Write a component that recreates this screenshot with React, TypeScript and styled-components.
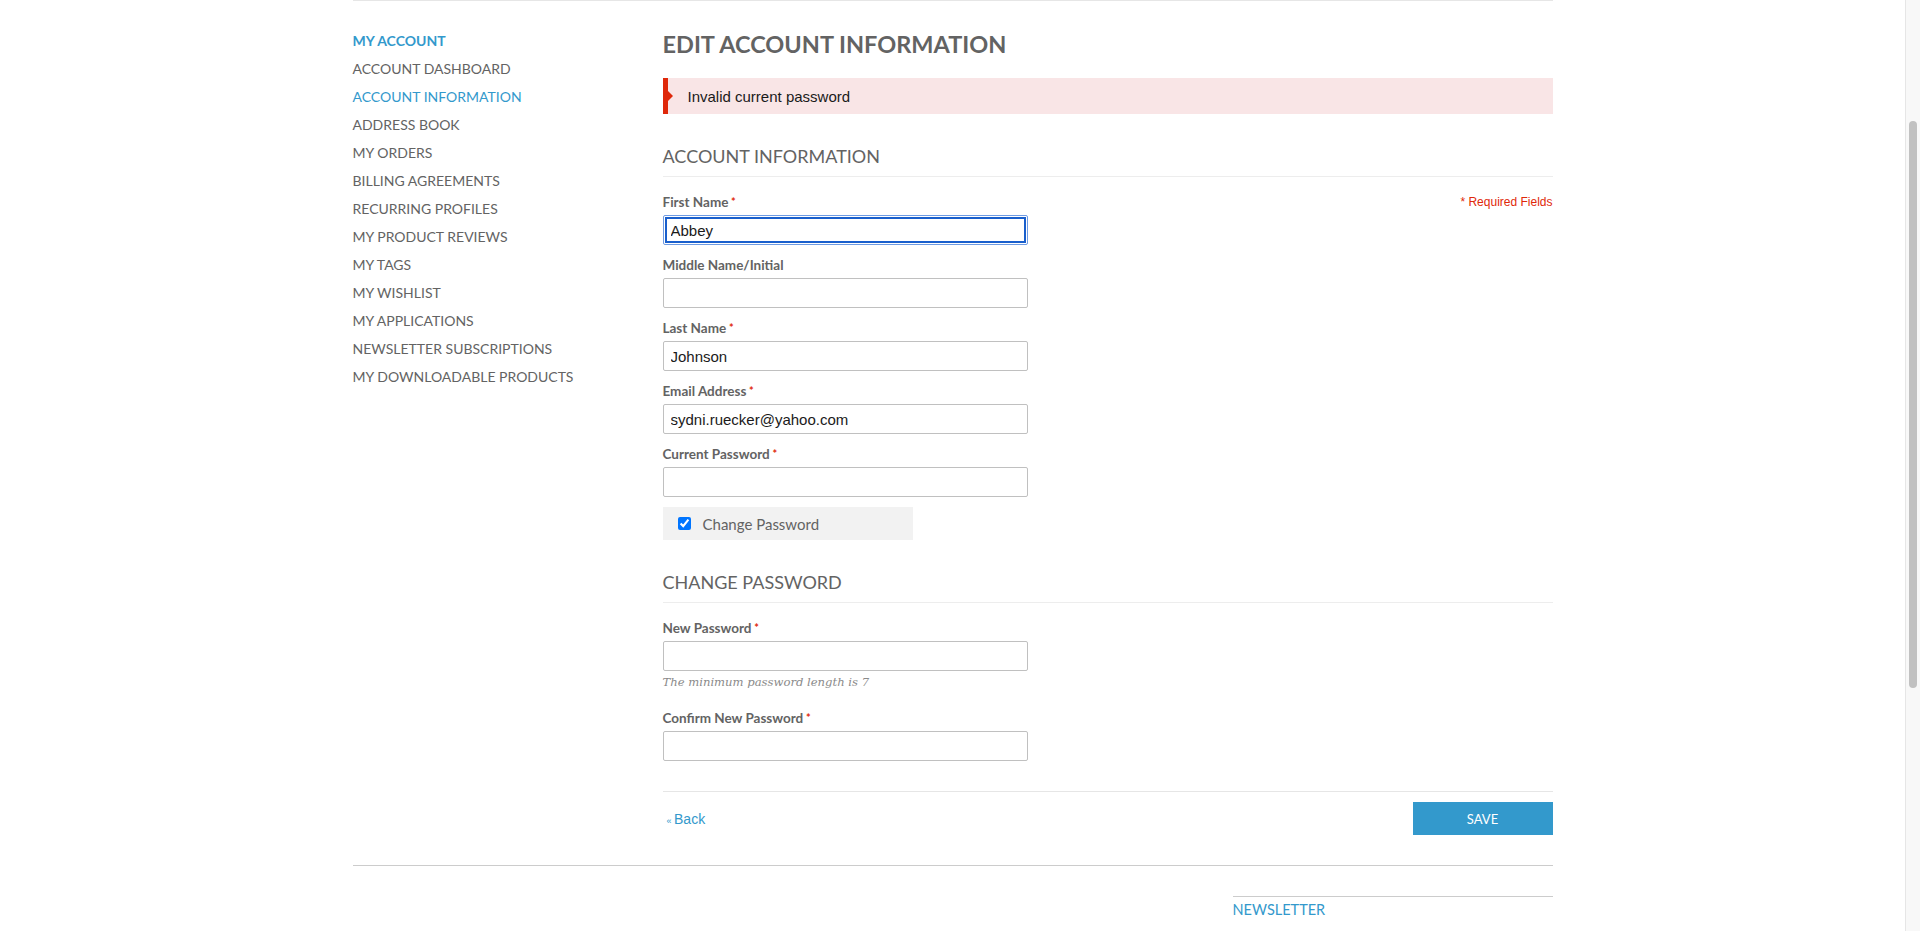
import React, { useState } from "react";
import styled, { createGlobalStyle } from "styled-components";

const HEAD_FONT = `"Lato", "Noto Sans", sans-serif`;
const BODY_FONT = `"Liberation Sans", Arial, sans-serif`;

const GlobalStyle = createGlobalStyle`
  html, body {
    margin: 0;
    padding: 0;
    height: 100%;
    overflow: hidden;
    background: #fff;
  }
  body {
    font-family: ${BODY_FONT};
    color: #636363;
  }
  * {
    box-sizing: border-box;
  }
`;

const navItems = [
  "Account Dashboard",
  "Account Information",
  "Address Book",
  "My Orders",
  "Billing Agreements",
  "Recurring Profiles",
  "My Product Reviews",
  "My Tags",
  "My Wishlist",
  "My Applications",
  "Newsletter Subscriptions",
  "My Downloadable Products",
];

interface FieldProps {
  label: string;
  required?: boolean;
  value?: string;
  type?: string;
  focused?: boolean;
  note?: string;
}

const Field: React.FC<FieldProps> = ({ label, required, value, type, focused, note }) => {
  const [val, setVal] = useState(value || "");
  return (
    <FieldRow>
      <Label>
        {label}
        {required && <Star> *</Star>}
      </Label>
      <Input
        type={type || "text"}
        value={val}
        onChange={(e) => setVal(e.target.value)}
        $focused={focused}
      />
      {note && <Note>{note}</Note>}
    </FieldRow>
  );
};

const App: React.FC = () => {
  const [changePw, setChangePw] = useState(true);

  return (
    <>
      <GlobalStyle />
      <Viewport>
        <Page>
          <Container>
            <Sidebar>
              <SideTitle>My Account</SideTitle>
              <NavList>
                {navItems.map((item) => (
                  <NavItem key={item} $active={item === "Account Information"}>
                    {item}
                  </NavItem>
                ))}
              </NavList>
            </Sidebar>

            <Main>
              <PageTitle>Edit Account Information</PageTitle>
              <ErrorMsg>Invalid current password</ErrorMsg>

              <SectionTitle>Account Information</SectionTitle>
              <FormBody>
                <Required>* Required Fields</Required>
                <Field label="First Name" required value="Abbey" focused />
                <Field label="Middle Name/Initial" />
                <Field label="Last Name" required value="Johnson" />
                <Field label="Email Address" required value="sydni.ruecker@yahoo.com" />
                <Field label="Current Password" required type="password" />
                <CheckRow>
                  <Check
                    type="checkbox"
                    checked={changePw}
                    onChange={() => setChangePw(!changePw)}
                  />
                  Change Password
                </CheckRow>
              </FormBody>

              <SectionTitle>Change Password</SectionTitle>
              <FormBody>
                <Field
                  label="New Password"
                  required
                  type="password"
                  note="The minimum password length is 7"
                />
                <Field label="Confirm New Password" required type="password" />
              </FormBody>

              <ButtonSet>
                <BackLink href="#">
                  <small>« </small>Back
                </BackLink>
                <SaveButton>Save</SaveButton>
              </ButtonSet>
            </Main>
          </Container>

          <Footer>
            <FooterCol>
              <FooterTitle>Newsletter</FooterTitle>
            </FooterCol>
          </Footer>
        </Page>
        <ScrollTrack>
          <ScrollThumb />
        </ScrollTrack>
      </Viewport>
    </>
  );
};

export default App;

const Viewport = styled.div`
  display: flex;
  height: 100vh;
  overflow: hidden;
`;

const Page = styled.div`
  flex: 1;
  min-width: 0;
`;

const ScrollTrack = styled.div`
  width: 15px;
  flex-shrink: 0;
  background: #f8f8f8;
  border-left: 1px solid #e6e6e6;
  padding: 121px 3px 0 3px;
`;

const ScrollThumb = styled.div`
  width: 8px;
  height: 567px;
  border-radius: 4px;
  background: #c1c1c1;
`;

const Container = styled.div`
  width: 1200px;
  margin: 0 auto;
  border-top: 1px solid #e6e6e6;
  display: grid;
  grid-template-columns: 1fr 890px;
  padding-bottom: 30px;
  border-bottom: 1px solid #cccccc;
`;

const Sidebar = styled.div`
  padding-top: 26px;
`;

const SideTitle = styled.div`
  font-family: ${HEAD_FONT};
  font-weight: 700;
  font-size: 14px;
  line-height: 28px;
  color: #3399cc;
  text-transform: uppercase;
`;

const NavList = styled.ul`
  list-style: none;
  margin: 0;
  padding: 0;
`;

const NavItem = styled.li<{ $active?: boolean }>`
  font-family: ${HEAD_FONT};
  font-size: 14px;
  line-height: 28px;
  text-transform: uppercase;
  color: ${(p) => (p.$active ? "#3399cc" : "#636363")};
  cursor: pointer;
`;

const Main = styled.div`
  padding-top: 27px;
`;

const PageTitle = styled.h1`
  margin: 0 0 18px;
  font-family: ${HEAD_FONT};
  font-weight: 700;
  font-size: 23.5px;
  line-height: 32px;
  color: #636363;
  text-transform: uppercase;
`;

const ErrorMsg = styled.div`
  position: relative;
  height: 36px;
  display: flex;
  align-items: center;
  padding-left: 20px;
  background: #f9e5e6;
  border-left: 5px solid #df280a;
  font-family: ${BODY_FONT};
  font-size: 15px;
  color: #1a1a1a;

  &::before {
    content: "";
    position: absolute;
    left: 0;
    top: 50%;
    margin-top: -5px;
    border-style: solid;
    border-width: 5px 0 5px 5px;
    border-color: transparent transparent transparent #df280a;
  }
`;

const SectionTitle = styled.h2`
  margin: 30px 0 0;
  padding-bottom: 8px;
  border-bottom: 1px solid #ededed;
  font-family: ${HEAD_FONT};
  font-weight: 400;
  font-size: 18px;
  line-height: 24px;
  color: #636363;
  text-transform: uppercase;
`;

const FormBody = styled.div`
  position: relative;
  padding-top: 16px;
  display: flex;
  flex-direction: column;
  align-items: flex-start;
`;

const Required = styled.p`
  position: absolute;
  right: 0;
  top: 18px;
  margin: 0;
  font-family: ${BODY_FONT};
  font-size: 12px;
  color: #df280a;
`;

const FieldRow = styled.div`
  width: 365px;
  margin-bottom: 11px;
`;

const Label = styled.label`
  display: block;
  margin-bottom: 4px;
  font-family: ${HEAD_FONT};
  font-weight: 700;
  font-size: 13.5px;
  line-height: 18px;
  color: #636363;
`;

const Star = styled.em`
  font-style: normal;
  font-size: 11px;
  vertical-align: top;
  color: #df280a;
`;

const Input = styled.input<{ $focused?: boolean }>`
  display: block;
  width: 365px;
  height: 30px;
  padding: 0 7px;
  border: 1px solid ${(p) => (p.$focused ? "#6f9be3" : "#c0c0c0")};
  border-radius: 2px;
  outline: ${(p) => (p.$focused ? "2px solid #1a5fcc" : "none")};
  outline-offset: -4px;
  font-family: ${BODY_FONT};
  font-size: 15px;
  color: #1a1a1a;
  background: #fff;
`;

const Note = styled.p`
  margin: 4px 0 9px;
  font-family: "DejaVu Serif", Georgia, serif;
  font-style: italic;
  font-size: 11.6px;
  color: #8a8a8a;
`;

const CheckRow = styled.label`
  display: flex;
  align-items: center;
  width: 250px;
  height: 33px;
  margin-top: -1px;
  padding-left: 15px;
  background: #f2f2f2;
  font-family: ${HEAD_FONT};
  font-size: 15px;
  color: #636363;
  cursor: pointer;
`;

const Check = styled.input`
  width: 13px;
  height: 13px;
  margin: 0 12px 0 0;
`;

const ButtonSet = styled.div`
  margin-top: 19px;
  padding-top: 10px;
  border-top: 1px solid #e6e6e6;
  display: flex;
  justify-content: space-between;
  align-items: center;
`;

const BackLink = styled.a`
  padding-left: 4px;
  font-family: ${BODY_FONT};
  font-size: 14px;
  color: #3399cc;
  text-decoration: none;

  small {
    font-size: 9px;
  }
`;

const SaveButton = styled.button`
  width: 140px;
  height: 33px;
  border: 0;
  background: #3399cc;
  color: #fff;
  font-family: ${HEAD_FONT};
  font-size: 13px;
  text-transform: uppercase;
  cursor: pointer;
`;

const Footer = styled.div`
  width: 1200px;
  margin: 0 auto;
  display: flex;
  justify-content: flex-end;
  padding-top: 30px;
`;

const FooterCol = styled.div`
  width: 320px;
  border-top: 1px solid #cccccc;
`;

const FooterTitle = styled.h3`
  margin: 0;
  padding-top: 4px;
  font-family: ${HEAD_FONT};
  font-weight: 400;
  font-size: 14.5px;
  color: #3399cc;
  text-transform: uppercase;
`;
